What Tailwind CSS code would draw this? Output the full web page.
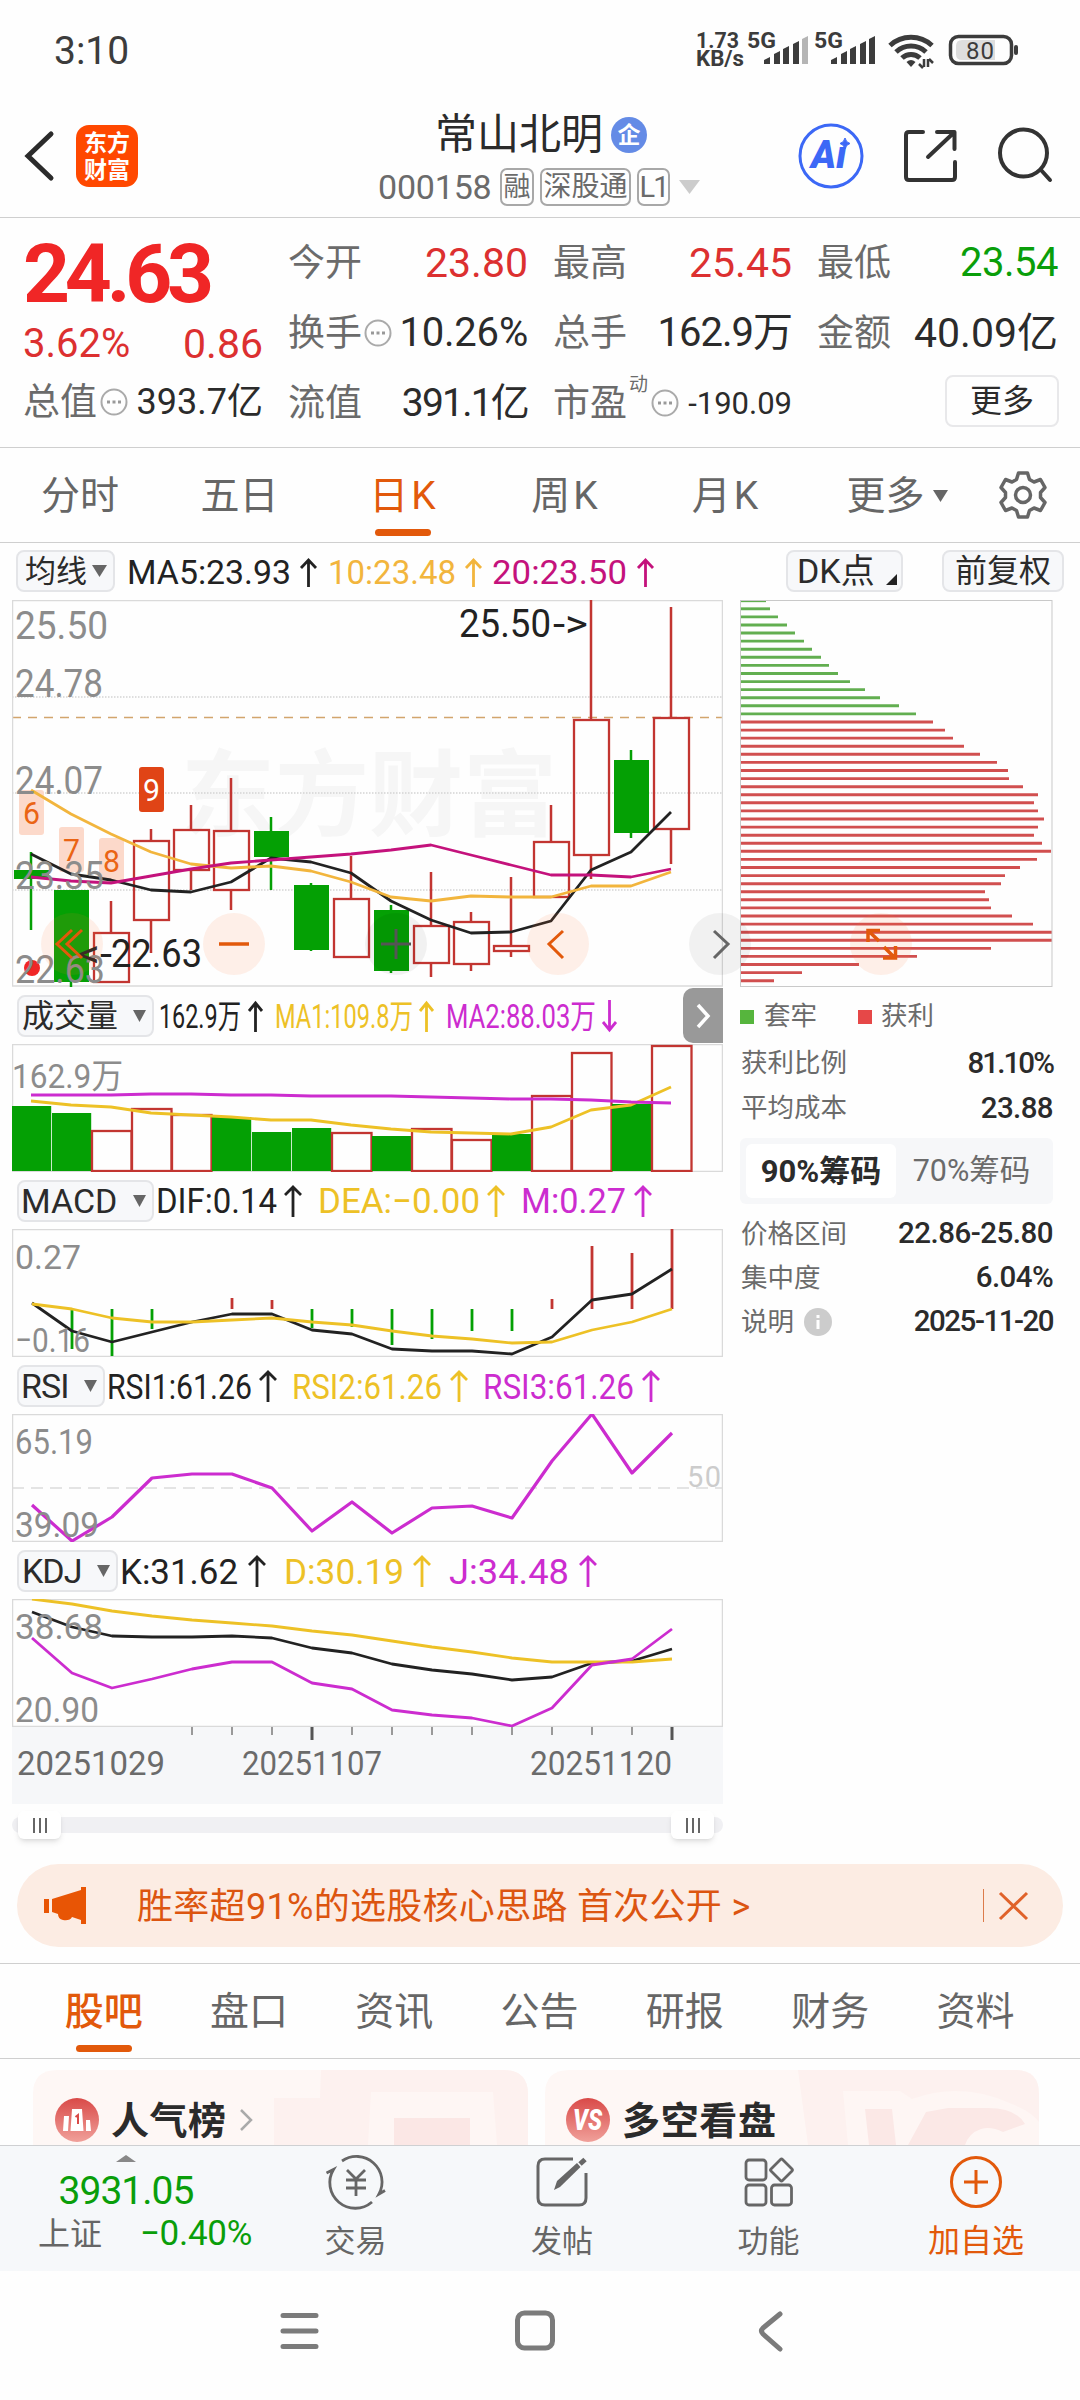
<!DOCTYPE html>
<html lang="zh-CN">
<head>
    <meta charset="UTF-8">
    <meta name="viewport" content="width=device-width, initial-scale=1.0">
    <title>常山北明 000158</title>
    <script src="https://cdn.jsdelivr.net/npm/@tailwindcss/browser@4"></script>
</head>
<body class="w-[1080px] h-[2400px] overflow-hidden bg-[#fefefe] text-[#2b2b2b] leading-none whitespace-nowrap font-['Roboto','Noto_Sans_CJK_SC',sans-serif]">

    <!-- Status bar -->
    <div class="h-[98px] flex items-center pl-[54px] text-[#3c3c3c]">
        <span class="text-[39px] pt-[4px]">3:10</span>
        <svg class="ml-auto w-[390px] h-[98px]" viewBox="690 0 390 98" fill="#3c3c3c">
            <g font-size="22" font-weight="700">
                <text x="696" y="48" textLength="43" lengthAdjust="spacingAndGlyphs">1.73</text>
                <text x="696" y="66" textLength="48" lengthAdjust="spacingAndGlyphs">KB/s</text>
                <text x="747" y="48" textLength="29" lengthAdjust="spacingAndGlyphs">5G</text>
                <text x="814" y="48" textLength="29" lengthAdjust="spacingAndGlyphs">5G</text>
            </g>
            <path d="M764 64v-4l6-3v7zM774 64V54l6-3v13zM783 64V49l6-3v18zM793 64V44l6-3v23z"/>
            <path d="M802 64V39l6-3v28z" fill="#b5b5b5"/>
            <path d="M831 64v-4l6-3v7zM841 64V54l6-3v13zM850 64V49l6-3v18zM860 64V44l6-3v23zM869 64V39l6-3v28z"/>
            <g fill="none" stroke="#3c3c3c" stroke-width="5">
                <path d="M890 45.500a31 31 0 0 1 42 0"/>
                <path d="M896 52a22 22 0 0 1 30 0"/>
                <path d="M902 58a13 13 0 0 1 18 0"/>
            </g>
            <path d="M906.500 62q4.500-4 9 0l-4.500 5z"/>
            <path d="M924 67v-8M923 68l-4-4M928 59v8M929 59l4 4" stroke="#3c3c3c" stroke-width="2.500" fill="none"/>
            <rect x="950.500" y="36.500" width="61" height="27" rx="8" fill="none" stroke="#3c3c3c" stroke-width="3.500"/>
            <path d="M962 40h33v20h-33q-6 0-6-6v-8q0-6 6-6z" fill="#dedede"/>
            <rect x="1014" y="45" width="4" height="10" rx="2"/>
            <text x="966" y="59" font-size="24" textLength="28">80</text>
        </svg>
    </div>

    <!-- Title bar -->
    <div class="h-[120px] flex border-b border-[#cfcfcf]">
        <svg class="w-[150px] h-[118px]" viewBox="0 98 150 118">
            <path d="M51 134L28 156L51 178" fill="none" stroke="#2b2b2b" stroke-width="5" stroke-linecap="round"/>
            <rect x="76" y="125" width="62" height="62" rx="13" fill="#ff4800"/>
            <g fill="#fff" font-size="23" font-weight="700" font-family="Noto Sans CJK SC">
                <text x="84" y="151" textLength="46">东方</text>
                <text x="84" y="178" textLength="46">财富</text>
            </g>
        </svg>
        <div class="w-[560px] pl-[228px] flex flex-col">
            <div class="mt-[14px] h-[46px] flex items-center ml-[57px]">
                <span class="text-[42px]">常山北明</span>
                <span class="ml-[8px] w-[36px] h-[36px] rounded-full bg-[#648be6] text-white text-[23px] font-bold flex items-center justify-center">企</span>
            </div>
            <div class="mt-[9px] h-[40px] flex items-center text-[#6b6b6b]">
                <span class="text-[34px] w-[122px] -tracking-[0.2px] shrink-0">000158</span>
                <div class="flex gap-[6px] text-[28px]">
                    <span class="w-[34px] h-[38px] border-2 border-[#a8a8a8] rounded-[7px] flex items-center justify-center text-[27px]">融</span>
                    <span class="w-[91px] h-[38px] border-2 border-[#a8a8a8] rounded-[7px] flex items-center justify-center">深股通</span>
                    <span class="w-[33px] h-[38px] border-2 border-[#a8a8a8] rounded-[7px] flex items-center justify-center text-[29px] tracking-[-2px]">L1</span>
                </div>
                <svg class="ml-[9px] w-[21px] h-[14px] shrink-0" viewBox="0 0 21 14"><path d="M0 0h21l-10.500 14z" fill="#ccc"/></svg>
            </div>
        </div>
        <svg class="ml-auto w-[300px] h-[118px]" viewBox="780 98 300 118" fill="none">
            <circle cx="831" cy="156" r="31" stroke="#3c68f6" stroke-width="3"/>
            <text x="811" y="168" font-size="38" font-weight="900" font-style="italic" fill="#3c68f6">Aı</text>
            <path d="M845 138q1 4.500 5 5.500q-4 1-5 5.500q-1-4.500-5-5.500q4-1 5-5.500z" fill="#3c68f6" stroke="#3c68f6"/>
            <g stroke="#333" stroke-width="4" stroke-linecap="round" stroke-linejoin="round">
                <path d="M923 132H909q-3 0-3 3v42q0 3 3 3h43q3 0 3-3v-15"/>
                <path d="M937 132h17.500v17M954 132.500L928 157"/>
                <circle cx="1023.500" cy="153" r="23.500"/>
                <path d="M1041 170L1050 180"/>
            </g>
        </svg>
    </div>

    <!-- Quote -->
    <div class="h-[230px] border-b border-[#cfcfcf] pt-[10px] pl-[23px] flex gap-[25px] text-[37px] text-[#6b6b6b]">
        <div class="w-[240px]">
            <div class="h-[92px] flex items-center text-[82px] font-bold tracking-[-5.200px] text-[#f02626]">24.63</div>
            <div class="h-[46px] pt-[2px] flex items-center justify-between text-[40px] text-[#dc3030]"><span>3.62%</span><span class="text-[41px]">0.86</span></div>
            <div class="h-[72px] flex items-center">
                <span>总值</span>
                <svg class="ml-[3px] w-[28px] h-[28px]" viewBox="0 0 28 28"><circle cx="14" cy="14" r="12.500" fill="none" stroke="#aaa" stroke-width="2"/><path d="M7 14h3M12.500 14h3M18 14h3" stroke="#999" stroke-width="3"/></svg>
                <span class="ml-auto text-[36px] text-[#2b2b2b]">393.7亿</span>
            </div>
        </div>
        <div class="w-[240px]">
            <div class="h-[70px] flex items-center justify-between"><span>今开</span><span class="text-[41px] text-[#dc3030]">23.80</span></div>
            <div class="h-[70px] flex items-center">
                <span>换手</span>
                <svg class="ml-[2px] w-[28px] h-[28px]" viewBox="0 0 28 28"><circle cx="14" cy="14" r="12.500" fill="none" stroke="#aaa" stroke-width="2"/><path d="M7 14h3M12.500 14h3M18 14h3" stroke="#999" stroke-width="3"/></svg>
                <span class="ml-auto text-[40px] tracking-[-0.200px] text-[#2b2b2b]">10.26%</span>
            </div>
            <div class="h-[70px] flex items-center justify-between"><span>流值</span><span class="text-[39px] tracking-[-1.800px] text-[#2b2b2b]">391.1亿</span></div>
        </div>
        <div class="w-[239px]">
            <div class="h-[70px] flex items-center justify-between"><span>最高</span><span class="text-[41px] text-[#dc3030]">25.45</span></div>
            <div class="h-[70px] flex items-center justify-between"><span>总手</span><span class="text-[40px] tracking-[-1px] text-[#2b2b2b]">162.9万</span></div>
            <div class="h-[70px] flex items-center">
                <span>市盈</span>
                <span class="text-[19px] ml-[2px] mb-[38px]">动</span>
                <svg class="ml-[3px] w-[28px] h-[28px]" viewBox="0 0 28 28"><circle cx="14" cy="14" r="12.500" fill="none" stroke="#aaa" stroke-width="2"/><path d="M7 14h3M12.500 14h3M18 14h3" stroke="#999" stroke-width="3"/></svg>
                <span class="ml-auto text-[31px] text-[#2b2b2b]">-190.09</span>
            </div>
        </div>
        <div class="w-[241px]">
            <div class="h-[70px] flex items-center justify-between"><span>最低</span><span class="text-[40px] tracking-[-0.500px] text-[#0a9e0a]">23.54</span></div>
            <div class="h-[70px] flex items-center justify-between"><span>金额</span><span class="text-[41px] text-[#2b2b2b]">40.09亿</span></div>
            <div class="h-[70px] flex items-center justify-end"><span class="w-[114px] h-[52px] -mr-[1px] mt-[-4px] border-2 border-[#e8e8ea] rounded-[8px] flex items-center justify-center text-[32px] text-[#2b2b2b]">更多</span></div>
        </div>
    </div>

    <!-- Period tabs -->
    <div class="h-[95px] border-b border-[#cfcfcf] flex text-[39px] text-[#666] text-center">
        <div class="w-[160px] pt-[29px]">分时</div>
        <div class="w-[159px] pt-[29px]">五日</div>
        <div class="w-[167px] pt-[29px] text-[#e2590b]">日<span class="ml-[3px]">K</span><div class="mx-auto mt-[13px] w-[56px] h-[7px] rounded-full bg-[#e2590b]"></div></div>
        <div class="w-[157px] pt-[29px]">周<span class="ml-[3px]">K</span></div>
        <div class="w-[164px] pt-[29px]">月<span class="ml-[3px]">K</span></div>
        <div class="w-[160px] pt-[29px] pl-[20px] flex justify-center gap-[8px]">更多<svg class="mt-[13px] w-[15px] h-[12px]" viewBox="0 0 15 12"><path d="M0 0h15l-7.500 12z" fill="#666"/></svg></div>
        <svg class="ml-[30px] mt-[21px] w-[52px] h-[52px]" viewBox="-26 -26 52 52" fill="none" stroke="#666" stroke-width="3.500" stroke-linejoin="round">
            <path d="M-4.500 -22H4.500L6.500 -15.500L11 -13L17.500 -15.500L22 -7.500L17.500 -2.500V2.500L22 7.500L17.500 15.500L11 13L6.500 15.500L4.500 22H-4.500L-6.500 15.500L-11 13L-17.500 15.500L-22 7.500L-17.500 2.500V-2.500L-22 -7.500L-17.500 -15.500L-11 -13L-6.500 -15.500Z"/>
            <circle r="7.500"/>
        </svg>
    </div>

    <!-- MA row -->
    <div class="h-[57px] flex items-start pt-[7px] pl-[16px]">
        <div class="w-[99px] h-[42px] rounded-[8px] border-2 border-[#e4e5e8] bg-[#f7f8fa] flex items-center pl-[7px] gap-[5px] text-[31px]">均线<svg class="w-[15px] h-[12px]" viewBox="0 0 15 12"><path d="M0 0h15l-7.500 12z" fill="#666"/></svg></div>
        <svg class="w-[608px] h-[50px]" viewBox="115 550 608 50" font-size="34" fill="none" stroke-width="2.800">
            <text x="127" y="584" fill="#222" textLength="164" lengthAdjust="spacingAndGlyphs">MA5:23.93</text>
            <path d="M308.500 587V560M301 568l7.500-8l7.500 8" stroke="#222"/>
            <text x="328" y="584" fill="#f2b53d" textLength="128" lengthAdjust="spacingAndGlyphs">10:23.48</text>
            <path d="M473.500 587V560M466 568l7.500-8l7.500 8" stroke="#f2b53d"/>
            <text x="492" y="584" fill="#c4127c" textLength="135" lengthAdjust="spacingAndGlyphs">20:23.50</text>
            <path d="M645.500 587V560M638 568l7.500-8l7.500 8" stroke="#c4127c"/>
        </svg>
        <div class="ml-[63px] w-[117px] h-[42px] rounded-[8px] border-2 border-[#e4e5e8] bg-[#f7f8fa] flex items-center pl-[9px] text-[32px]"><span class="w-[89px] text-[34px]">DK点</span><svg class="mt-[16px] w-[11px] h-[11px]" viewBox="0 0 11 11"><path d="M11 0v11H0z" fill="#222"/></svg></div>
        <div class="ml-[39px] w-[122px] h-[42px] rounded-[8px] border-2 border-[#e4e5e8] bg-[#f7f8fa] flex items-center justify-center text-[32px]">前复权</div>
    </div>

    <!-- Charts -->
    <div class="relative h-[1249px] flex">
        <div class="w-[723px] pl-[12px]">
            <svg id="kline" class="block w-[711px] h-[387px]" viewBox="0 0 711 387" fill="none">
                <text x="169" y="229" font-size="94" font-weight="700" fill="#f6f6f6" textLength="376">东方财富</text>
                <path d="M0 97H711M0 193H711M0 290H711" stroke="#d4d4d4" stroke-width="1.500" stroke-dasharray="1.500 1.500"/>
                <path d="M0 117.500H711" stroke="#d2a56d" stroke-width="1.500" stroke-dasharray="9 7"/>
                <rect x="0.500" y="0.500" width="710" height="385.500" stroke="#dadada" stroke-width="1.500"/>
            </svg>

            <div class="h-[57px] flex items-start pt-[8px] pl-[5px]">
                <div class="w-[137px] h-[42px] rounded-[8px] border-2 border-[#e4e5e8] bg-[#f7f8fa] flex items-center justify-between pl-[3px] pr-[6px] text-[32px]">成交量<svg class="w-[13px] h-[12px]" viewBox="0 0 13 12"><path d="M0 0h13l-6.500 12z" fill="#666"/></svg></div>
                <svg class="w-[529px] h-[42px]" viewBox="154 995 529 42" font-size="33" fill="none" stroke-width="2.800">
                    <text x="159" y="1028" fill="#222" textLength="82" lengthAdjust="spacingAndGlyphs">162.9万</text>
                    <path d="M255.500 1032V1003M249 1011l6.500-8l6.500 8" stroke="#222"/>
                    <text x="275" y="1028" fill="#edc126" textLength="138" lengthAdjust="spacingAndGlyphs">MA1:109.8万</text>
                    <path d="M426.500 1032V1003M420 1011l6.500-8l6.500 8" stroke="#edc126"/>
                    <text x="446" y="1028" fill="#cc2ccf" textLength="150" lengthAdjust="spacingAndGlyphs">MA2:88.03万</text>
                    <path d="M609.500 1000V1030M603 1022l6.500 8l6.500-8" stroke="#cc2ccf"/>
                </svg>
                <div class="-mt-[7px] w-[40px] h-[55px] rounded-l-[10px] bg-[#999] flex items-center justify-center"><svg class="w-[16px] h-[26px]" viewBox="0 0 16 26"><path d="M3 2l10 11L3 24" fill="none" stroke="#fff" stroke-width="3.500"/></svg></div>
            </div>
            <svg id="volume" class="block w-[711px] h-[128px]" viewBox="0 0 711 128" fill="none">
                <rect x="0.500" y="0.500" width="710" height="127" stroke="#dadada" stroke-width="1.500"/>
            </svg>

            <div class="h-[57px] flex items-start pt-[8px] pl-[5px]">
                <div class="w-[137px] h-[42px] rounded-[8px] border-2 border-[#e4e5e8] bg-[#f7f8fa] flex items-center justify-between pl-[2px] pr-[6px] text-[34px]">MACD<svg class="w-[13px] h-[12px]" viewBox="0 0 13 12"><path d="M0 0h13l-6.500 12z" fill="#666"/></svg></div>
                <svg class="w-[569px] h-[42px]" viewBox="154 1180 569 42" font-size="35" fill="none" stroke-width="2.800">
                    <text x="156" y="1213" fill="#222" textLength="121" lengthAdjust="spacingAndGlyphs">DIF:0.14</text>
                    <path d="M293 1217V1187M285 1195l8-8l8 8" stroke="#222"/>
                    <text x="318" y="1213" fill="#edc126" textLength="162" lengthAdjust="spacingAndGlyphs">DEA:−0.00</text>
                    <path d="M496 1217V1187M488 1195l8-8l8 8" stroke="#edc126"/>
                    <text x="521" y="1213" fill="#cc2ccf" textLength="105" lengthAdjust="spacingAndGlyphs">M:0.27</text>
                    <path d="M643 1217V1187M635 1195l8-8l8 8" stroke="#cc2ccf"/>
                </svg>
            </div>
            <svg id="macd" class="block w-[711px] h-[128px]" viewBox="0 0 711 128" fill="none">
                <rect x="0.500" y="0.500" width="710" height="127" stroke="#dadada" stroke-width="1.500"/>
            </svg>

            <div class="h-[57px] flex items-start pt-[8px] pl-[5px]">
                <div class="w-[88px] h-[42px] rounded-[8px] border-2 border-[#e4e5e8] bg-[#f7f8fa] flex items-center justify-between pl-[2px] pr-[6px] text-[34px] tracking-[-1px]">RSI<svg class="w-[13px] h-[12px]" viewBox="0 0 13 12"><path d="M0 0h13l-6.500 12z" fill="#666"/></svg></div>
                <svg class="w-[618px] h-[42px]" viewBox="105 1365 618 42" font-size="35" fill="none" stroke-width="2.800">
                    <text x="107" y="1399" fill="#222" textLength="145" lengthAdjust="spacingAndGlyphs">RSI1:61.26</text>
                    <path d="M268 1402V1372M260 1380l8-8l8 8" stroke="#222"/>
                    <text x="292" y="1399" fill="#edc126" textLength="150" lengthAdjust="spacingAndGlyphs">RSI2:61.26</text>
                    <path d="M459 1402V1372M451 1380l8-8l8 8" stroke="#edc126"/>
                    <text x="483" y="1399" fill="#cc2ccf" textLength="151" lengthAdjust="spacingAndGlyphs">RSI3:61.26</text>
                    <path d="M651 1402V1372M643 1380l8-8l8 8" stroke="#cc2ccf"/>
                </svg>
            </div>
            <svg id="rsi" class="block w-[711px] h-[128px]" viewBox="0 0 711 128" fill="none">
                <rect x="0.500" y="0.500" width="710" height="127" stroke="#dadada" stroke-width="1.500"/>
                <path d="M0 74H711" stroke="#dcdcdc" stroke-width="1.500" stroke-dasharray="12 7"/>
                <text x="675" y="73" font-size="29" fill="#ccc" textLength="34">50</text>
            </svg>

            <div class="h-[57px] flex items-start pt-[8px] pl-[5px]">
                <div class="w-[101px] h-[42px] rounded-[8px] border-2 border-[#e4e5e8] bg-[#f7f8fa] flex items-center justify-between pl-[3px] pr-[6px] text-[34px] tracking-[-1px]">KDJ<svg class="w-[13px] h-[12px]" viewBox="0 0 13 12"><path d="M0 0h13l-6.500 12z" fill="#666"/></svg></div>
                <svg class="w-[605px] h-[42px]" viewBox="118 1550 605 42" font-size="35" fill="none" stroke-width="2.800">
                    <text x="120" y="1584" fill="#222" textLength="118" lengthAdjust="spacingAndGlyphs">K:31.62</text>
                    <path d="M257 1587V1557M249 1565l8-8l8 8" stroke="#222"/>
                    <text x="284" y="1584" fill="#edc126" textLength="120" lengthAdjust="spacingAndGlyphs">D:30.19</text>
                    <path d="M422 1587V1557M414 1565l8-8l8 8" stroke="#edc126"/>
                    <text x="449" y="1584" fill="#cc2ccf" textLength="120" lengthAdjust="spacingAndGlyphs">J:34.48</text>
                    <path d="M588 1587V1557M580 1565l8-8l8 8" stroke="#cc2ccf"/>
                </svg>
            </div>
            <svg id="kdj" class="block w-[711px] h-[128px]" viewBox="0 0 711 128" fill="none">
                <rect x="0.500" y="0.500" width="710" height="127" stroke="#dadada" stroke-width="1.500"/>
            </svg>

            <svg id="axis" class="block w-[711px] h-[77px] bg-[#f6f7f9]" viewBox="0 0 711 77" font-size="34" fill="#6b6b6b">
                <text x="5" y="48" textLength="148" lengthAdjust="spacingAndGlyphs">20251029</text>
                <text x="230" y="48" textLength="140" lengthAdjust="spacingAndGlyphs">20251107</text>
                <text x="518" y="48" textLength="142" lengthAdjust="spacingAndGlyphs">20251120</text>
            </svg>

            <!-- Range slider -->
            <div class="mt-[13px] h-[16px] rounded-full bg-[#f0f0f3] flex items-center justify-between pl-[6px] pr-[9px]">
                <div class="w-[43px] h-[28px] rounded-[6px] bg-white shadow-md flex items-center justify-center gap-[4px]"><i class="w-[2px] h-[15px] bg-[#666]"></i><i class="w-[2px] h-[15px] bg-[#666]"></i><i class="w-[2px] h-[15px] bg-[#666]"></i></div>
                <div class="w-[43px] h-[28px] rounded-[6px] bg-white shadow-md flex items-center justify-center gap-[4px]"><i class="w-[2px] h-[15px] bg-[#666]"></i><i class="w-[2px] h-[15px] bg-[#666]"></i><i class="w-[2px] h-[15px] bg-[#666]"></i></div>
            </div>
        </div>

        <!-- Chip distribution -->
        <div class="ml-[17px] w-[313px] text-[26.500px] text-[#6b6b6b]">
            <svg id="chips" class="block w-[313px] h-[387px]" viewBox="0 0 313 387" fill="none"></svg>
            <div class="h-[54px] pt-[5px] flex items-center">
                <i class="w-[14px] h-[14px] bg-[#56b53d]"></i><span class="ml-[10px]">套牢</span>
                <i class="ml-[41px] w-[14px] h-[14px] bg-[#e64848]"></i><span class="ml-[9px]">获利</span>
            </div>
            <div class="h-[45px] pl-[1px] flex items-center justify-between"><span>获利比例</span><b class="font-medium text-[29.500px] tracking-[-1.900px] text-[#2b2b2b]">81.10%</b></div>
            <div class="h-[45px] pl-[1px] flex items-center justify-between"><span>平均成本</span><b class="font-medium text-[29.500px] tracking-[-0.600px] text-[#2b2b2b]">23.88</b></div>
            <div class="mt-[7px] h-[66px] rounded-[6px] bg-[#f6f7f9] p-[6px] flex text-[30px]">
                <div class="w-[150px] rounded-[6px] bg-white flex items-center justify-center font-bold text-[31px] text-[#2b2b2b]">90%筹码</div>
                <div class="flex-1 flex items-center justify-center text-[30.500px]">70%筹码</div>
            </div>
            <div class="mt-[8px] h-[44px] pl-[1px] flex items-center justify-between"><span>价格区间</span><b class="font-medium text-[29.500px] tracking-[-0.500px] text-[#2b2b2b]">22.86-25.80</b></div>
            <div class="h-[44px] pl-[1px] flex items-center justify-between"><span>集中度</span><b class="font-medium text-[29.500px] tracking-[-0.600px] text-[#2b2b2b]">6.04%</b></div>
            <div class="h-[44px] pl-[1px] flex items-center"><span>说明</span>
                <svg class="ml-[10px] w-[28px] h-[28px]" viewBox="0 0 28 28"><circle cx="14" cy="14" r="14" fill="#ccc"/><path d="M14 12v9M14 7v3" stroke="#fff" stroke-width="3"/></svg>
                <b class="ml-auto font-medium text-[29.500px] tracking-[-1.500px] text-[#2b2b2b]">2025-11-20</b></div>
        </div>

        <!-- Floating chart controls -->
        <svg class="absolute left-[41px] top-[312px] w-[872px] h-[64px]" viewBox="41 912 872 64" fill="none" stroke="#e2590b" stroke-width="3">
            <g stroke="none" fill="#ff7a33" fill-opacity="0.110">
                <circle cx="72" cy="944" r="31"/><circle cx="234" cy="944" r="31"/><circle cx="558" cy="944" r="31"/><circle cx="881" cy="944" r="31"/>
            </g>
            <g stroke="none" fill="#000" fill-opacity="0.050"><circle cx="396" cy="944" r="31"/><circle cx="720" cy="944" r="31"/></g>
            <path d="M72 930L57 944L72 958M82 930L67 944L82 958"/>
            <path d="M219 944H249" stroke-width="3.500"/>
            <path d="M381 944H411M396 929V959" stroke="#555"/>
            <path d="M563 931L549 944L563 958"/>
            <path d="M714 931L728 944L714 958" stroke="#666"/>
            <path d="M868 942V930.500H880M868 930.500L879 941M884 947L895 958M883 958H895.500V946" stroke-width="3.500"/>
        </svg>
    </div>

    <!-- Promo -->
    <div class="mt-[15px] mx-[17px] h-[83px] rounded-[42px] bg-[#fcece3] flex items-center text-[#dc5510]">
        <svg class="ml-[27px] w-[44px] h-[38px]" viewBox="0 0 44 38" fill="#e85505"><path d="M0 12h5v14H0zM8 12L37 3V0h5v37h-5v-4l-9-3q-2 4-9 3q-5-1-5-6l-6-2z"/></svg>
        <span class="ml-[49px] mt-[2px] text-[36px] tracking-[0.300px]">胜率超91%的选股核心思路 首次公开 &gt;</span>
        <i class="ml-auto w-[1.500px] h-[33px] bg-[#dc7b4a]"></i>
        <svg class="ml-[14px] mr-[34px] w-[31px] h-[30px]" viewBox="0 0 31 30"><path d="M2 2l27 26M29 2L2 28" stroke="#e0622a" stroke-width="3"/></svg>
    </div>

    <!-- Section tabs -->
    <div class="mt-[16px] h-[96px] border-y border-[#cfcfcf] flex pl-[31px] text-[39px] text-[#666] text-center">
        <div class="w-[145.300px] pt-[29px] text-[#e2590b] font-medium">股吧<div class="mx-auto mt-[13px] w-[56px] h-[7px] rounded-full bg-[#e2590b]"></div></div>
        <div class="w-[145.300px] pt-[29px]">盘口</div>
        <div class="w-[145.300px] pt-[29px]">资讯</div>
        <div class="w-[145.300px] pt-[29px]">公告</div>
        <div class="w-[145.300px] pt-[29px]">研报</div>
        <div class="w-[145.300px] pt-[29px]">财务</div>
        <div class="w-[145.300px] pt-[29px]">资料</div>
    </div>

    <!-- Cards -->
    <div class="h-[86px] pt-[11px] pl-[33px] flex gap-[17px] overflow-hidden">
        <svg class="w-[495px] h-[75px]" viewBox="33 2070 495 75">
            <defs><linearGradient id="badge" x1="0" y1="0" x2="0" y2="1"><stop offset="0" stop-color="#d94a48"/><stop offset="1" stop-color="#f0a09a"/></linearGradient></defs>
            <path d="M33 2145V2094q0-24 24-24H504q24 0 24 24V2145z" fill="#fef7f5"/>
            <path d="M321 2070H504q24 0 24 24V2145H274V2098H320z" fill="#fdf1ef"/>
            <path d="M371 2092H493L497 2145H368z" fill="#fef6f4"/>
            <path d="M394 2118H470V2145H394z" fill="#fbe7e5"/>
            <circle cx="77" cy="2120" r="22" fill="url(#badge)"/>
            <path d="M64 2116h5l-1 15h-5zM72 2109h10l1.500 22h-13zM86 2120h4l1 11h-5z" fill="#fff"/>
            <path d="M78 2124v-9l-2.500 2" stroke="#d94a48" stroke-width="2" fill="none"/>
            <text x="111" y="2134" font-size="38" font-weight="700" fill="#2b2b2b" font-family="Noto Sans CJK SC" textLength="115">人气榜</text>
            <path d="M241 2110l10 10l-10 10" fill="none" stroke="#aaa" stroke-width="2.500"/>
        </svg>
        <svg class="w-[495px] h-[75px]" viewBox="545 2070 495 75">
            <path d="M545 2145V2094q0-24 24-24H1015q24 0 24 24V2145z" fill="#fef7f5"/>
            <path d="M798 2070H1015q24 0 24 24V2145H808z" fill="#fdf1ef"/>
            <path d="M843 2091h57l12 8q50-18 100 5q20 8 27 18v23H848z" fill="#fef6f4"/>
            <path d="M865 2109h27l4 36h-27zM926 2112l22-4h40q28 0 37 16l-22 8q-12-6-22-3q-12 4-16 16H908z" fill="#fbe8e6"/>
            <circle cx="588" cy="2120" r="22" fill="url(#badge)"/>
            <text x="573" y="2130" font-size="29" font-weight="900" font-style="italic" fill="#fff" textLength="29" lengthAdjust="spacingAndGlyphs">VS</text>
            <text x="622" y="2134" font-size="38" font-weight="700" fill="#2b2b2b" font-family="Noto Sans CJK SC" textLength="154">多空看盘</text>
        </svg>
    </div>

    <!-- Bottom bar -->
    <div class="h-[126px] border-t border-[#cfd0d2] bg-[#f6f8fa] flex text-[31px] text-[#666] text-center">
        <div class="w-[252px] pt-[9px]">
            <svg class="mx-auto w-[20px] h-[7px]" viewBox="0 0 20 7"><path d="M0 7L10 0L20 7z" fill="#888"/></svg>
            <div class="mt-[10px] text-[39px] tracking-[-1px] text-[#0a9e0a]">3931.05</div>
            <div class="mt-[5px] pl-[38px] flex justify-between items-center text-[32px]">上证<span class="text-[35px] tracking-[-0.300px] text-[#0a9e0a]">−0.40%</span></div>
        </div>
        <div class="w-[207px] pt-[6px] flex flex-col items-center">
            <svg class="w-[64px] h-[60px]" viewBox="-32 -30 64 60" fill="none" stroke="#666" stroke-width="2.800">
                <path d="M-14 -21A25.500 25.500 0 0 1 23 12L29 8.500M16 20A25.500 25.500 0 0 1 -22.500 -12.500L-29.500 -9"/>
                <path d="M-9 -12L0 -3L9 -12M-10 -2H10M-10 6H10M0 -3V14"/>
            </svg>
            <span class="mt-[14px]">交易</span>
        </div>
        <div class="w-[206px] pt-[6px] flex flex-col items-center">
            <svg class="w-[64px] h-[60px]" viewBox="-32 -30 64 60" fill="none" stroke="#666" stroke-width="3">
                <path d="M11 -23H-17q-7 0-7 7V16q0 7 7 7H17q7 0 7-7V-9"/>
                <path d="M-8 8L-5 -1L15 -19L18.500 -15L-2 5z" fill="#666" stroke="none"/><path d="M18 -18L23 -22.500" stroke-width="5"/>
            </svg>
            <span class="mt-[14px]">发帖</span>
        </div>
        <div class="w-[207px] pt-[6px] flex flex-col items-center">
            <svg class="w-[64px] h-[60px]" viewBox="-32 -30 64 60" fill="none" stroke="#666" stroke-width="2.800">
                <rect x="-23" y="-22" width="20" height="20" rx="3"/><rect x="-23" y="3" width="20" height="20" rx="3"/><rect x="2.500" y="3" width="20" height="20" rx="3"/>
                <path d="M11.500 -22.500Q12.500 -23.500 13.500 -22.500L23 -13Q24 -12 23 -11L13.500 -1.500Q12.500 -0.500 11.500 -1.500L2 -11Q1 -12 2 -13z"/>
            </svg>
            <span class="mt-[14px]">功能</span>
        </div>
        <div class="w-[208px] pt-[6px] flex flex-col items-center text-[32px] text-[#e2590b]">
            <svg class="w-[64px] h-[60px]" viewBox="-32 -30 64 60" fill="none" stroke="#e2590b" stroke-width="3"><circle r="24.500"/><path d="M-12 0H12M0 -12V12"/></svg>
            <span class="mt-[13px]">加自选</span>
        </div>
    </div>

    <!-- System navigation -->
    <svg class="block w-[1080px] h-[128px]" viewBox="0 2271 1080 128" fill="none" stroke="#7b7b7b" stroke-width="5" stroke-linecap="round" stroke-linejoin="round">
        <path d="M283 2315.500H316M283 2331H316M283 2346.500H316"/>
        <rect x="517.500" y="2313" width="35" height="35" rx="7"/>
        <path d="M780 2314L763 2328Q760 2331 763 2334L780 2349"/>
    </svg>

    <script>
        const RED = '#c23531', GREEN = '#04a004', BLACK = '#222', YELLOW = '#edc126', PURPLE = '#cc2ccf';
        const NS = 'http://www.w3.org/2000/svg';

        function add(id, tag, attrs, text) {
            const el = document.createElementNS(NS, tag);
            for (const key in attrs) el.setAttribute(key, attrs[key]);
            if (text) el.textContent = text;
            document.getElementById(id).appendChild(el);
        }

        function line(id, values, color, x0, width = 2.8) {
            add(id, 'polyline', {
                points: values.map((v, i) => `${x0 + i * 40},${v}`).join(' '),
                stroke: color, 'stroke-width': width, 'stroke-linejoin': 'round'
            });
        }

        function label(id, text, x, y, width, size = 36, color = '#8c8c8c') {
            add(id, 'text', { x, y, fill: color, 'font-size': size, textLength: width, lengthAdjust: 'spacingAndGlyphs' }, text);
        }

        // [high, body top, body bottom, low, rising]
        const candles = [
            [252, 270, 279, 330, 0], [290, 290, 382, 387, 0], [301, 332, 382, 382, 1], [229, 240, 320, 353, 1],
            [205, 229, 270, 290, 1], [178, 230, 290, 310, 1], [217, 231, 257, 290, 0], [283, 285, 350, 351, 0],
            [256, 298, 357, 357, 1], [305, 310, 371, 373, 0], [272, 325, 363, 377, 1], [312, 321, 364, 371, 1],
            [277, 345, 351, 357, 1], [205, 241, 297, 297, 1], [0, 119, 255, 279, 1], [150, 160, 233, 238, 0],
            [7, 117, 229, 264, 1]
        ];
        candles.forEach(([high, top, bottom, low, up], i) => {
            const x = 19 + i * 40, color = up ? RED : GREEN;
            add('kline', 'path', { d: `M${x} ${high}V${top}M${x} ${bottom}V${low}`, stroke: color, 'stroke-width': 2.5 });
            add('kline', 'rect', up
                ? { x: x - 17, y: top + 1, width: 35, height: bottom - top - 1, stroke: color, 'stroke-width': 2.3 }
                : { x: x - 17, y: top, width: 35, height: bottom - top, fill: color });
        });
        [['6', 7, 190], ['7', 47, 227], ['8', 87, 238], ['9', 127, 167]].forEach(([n, x, y]) => {
            add('kline', 'rect', { x, y, width: 25, height: 45, rx: 3, fill: n === '9' ? '#e04416' : '#fcd9ca' });
            label('kline', n, x + 4, y + 34, 17, 31, n === '9' ? '#fff' : '#ea6414');
        });
        line('kline', [254, 274, 280, 290, 292, 282, 258, 262, 273, 301, 320, 333, 332, 321, 270, 252, 212], BLACK, 19);
        line('kline', [190, 214, 234, 252, 264, 268, 266, 271, 282, 297, 301, 296, 297, 297, 286, 286, 272], '#f2b53d', 19);
        line('kline', [277, 281, 283, 276, 269, 263, 260, 257, 254, 250, 245, 255, 265, 275, 275, 277, 269], '#c4127c', 19);
        add('kline', 'circle', { cx: 20, cy: 368, r: 8, fill: '#f02626' });
        label('kline', '25.50', 3, 39, 93, 38);
        label('kline', '24.78', 3, 97, 88, 38);
        label('kline', '24.07', 3, 194, 88, 38);
        label('kline', '23.35', 3, 289, 89, 38);
        label('kline', '22.63', 3, 383, 90, 38);
        label('kline', '25.50', 447, 37, 92, 38, BLACK);
        label('kline', '->', 541, 37, 35, 38, BLACK);
        label('kline', '<-', 66, 367, 34, 38, BLACK);
        label('kline', '22.63', 99, 367, 91, 38, BLACK);

        const volumes = [63, 70, 86, 64, 70, 74, 89, 85, 88, 93, 84, 95, 91, 51, 8, 61, 1];
        const rising = [0, 0, 1, 1, 1, 0, 0, 0, 1, 0, 1, 1, 0, 1, 1, 0, 1];
        volumes.forEach((top, i) => {
            add('volume', 'rect', rising[i]
                ? { x: i * 40, y: top + 1, width: 39.5, height: 126 - top, stroke: RED, 'stroke-width': 2.3 }
                : { x: i * 40, y: top - 1, width: 39.2, height: 128 - top, fill: GREEN });
        });
        line('volume', [57, 61, 63, 69, 71, 73, 76, 76, 81, 85, 88, 89, 90, 83, 66, 61, 43], YELLOW, 19);
        line('volume', [51, 51, 51, 50, 50, 51, 51, 52, 52, 52, 53, 54, 55, 55, 56, 58, 59], PURPLE, 19);
        label('volume', '162.9万', 0, 44, 111, 34);

        const bars = [80, 120, 127, 100, 80, 69, 71, 99, 98, 116, 110, 102, 102, 70, 17, 24, 0];
        bars.forEach((y, i) => add('macd', 'path', { d: `M${20 + i * 40} 80V${y}`, stroke: y < 80 ? RED : GREEN, 'stroke-width': 2.8 }));
        line('macd', [74, 102, 113, 103, 93, 85, 85, 101, 105, 120, 122, 122, 125, 108, 71, 65, 40], BLACK, 20);
        line('macd', [75, 80, 89, 93, 93, 91, 89, 93, 96, 102, 107, 110, 114, 113, 101, 93, 80], YELLOW, 20);
        label('macd', '0.27', 3, 40, 66, 34);
        label('macd', '−0.16', 3, 123, 75, 34);

        line('rsi', [91, 127, 103, 64, 60, 60, 74, 117, 88, 119, 94, 92, 104, 38 + 9, 0, 59, 19], PURPLE, 20, 3.2);
        label('rsi', '65.19', 3, 40, 78, 35);
        label('rsi', '39.09', 3, 123, 84, 35);

        line('kdj', [13, 28, 37, 38, 38, 37, 39, 49, 54, 65, 71, 75, 81, 78, 64, 62, 50], BLACK, 20);
        line('kdj', [0, 5, 12, 17, 21, 24, 27, 32, 36, 42, 48, 53, 59, 63, 63, 63, 60], YELLOW, 20);
        line('kdj', [39, 74, 89, 80, 70, 63, 63, 84, 90, 111, 116, 119, 127, 109, 66, 60, 30], PURPLE, 20);
        label('kdj', '38.68', 3, 40, 88, 35);
        label('kdj', '20.90', 3, 123, 84, 35);

        for (let i = 4; i <= 16; i++) {
            const major = i === 7 || i === 16;
            add('axis', 'path', { d: `M${20 + i * 40} 0v${major ? 13 : 8}`, stroke: major ? '#555' : '#999', 'stroke-width': major ? 3 : 2 });
        }

        const chips = [26, 30, 38, 47, 55, 64, 72, 81, 89, 98, 110, 125, 140, 159, 176,
            193, 205, 213, 224, 240, 257, 268, 269, 283, 298, 294, 298, 304, 298, 294, 302, 311, 297, 280,
            265, 261, 245, 249, 251, 272, 293, 312, 312, 251, 177, 119, 62, 34];
        chips.forEach((w, i) => {
            add('chips', 'path', { d: `M0 ${(0.7 + i * 8.085).toFixed(1)}h${w}`, stroke: i < 15 ? '#62ae50' : '#d14f4f', 'stroke-width': 2.9 });
        });
        add('chips', 'rect', { x: 0.5, y: 0.5, width: 311.5, height: 386, stroke: '#c9c9c9' });
    </script>
</body>
</html>
